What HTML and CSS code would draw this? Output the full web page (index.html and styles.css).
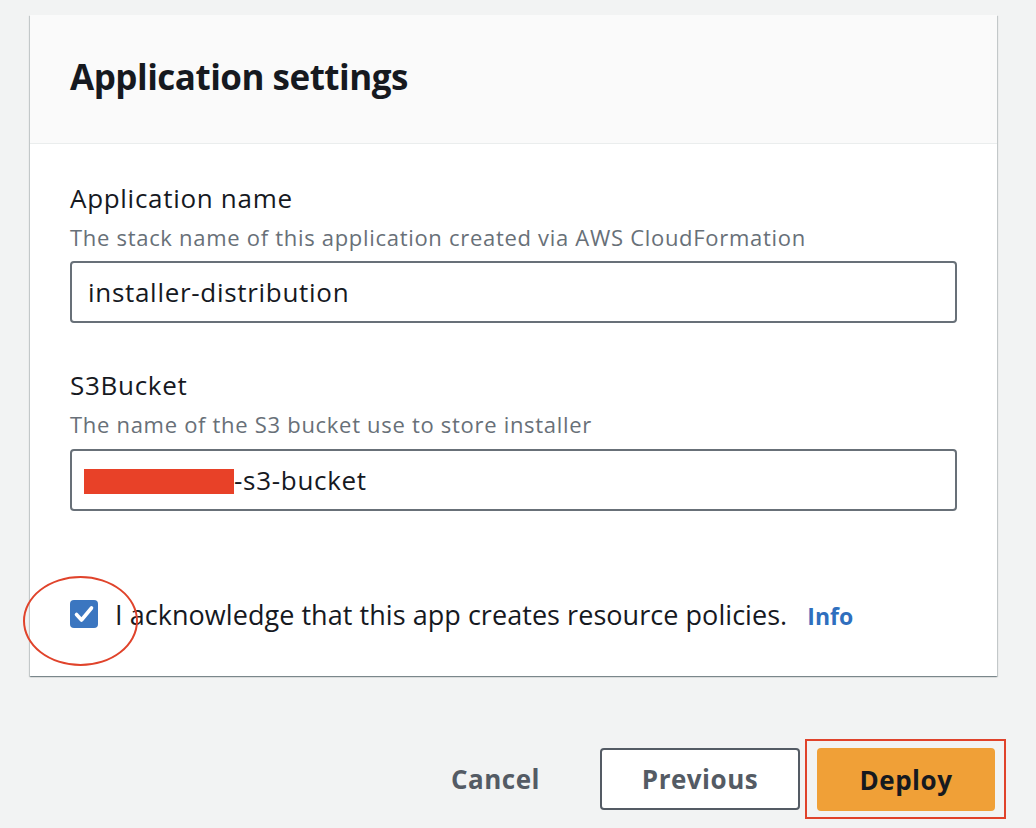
FILE: index.html
```html
<!DOCTYPE html>
<html>
<head>
<meta charset="utf-8">
<link rel="stylesheet" href="styles.css">
</head>
<body>
<div class="page">
  <section class="card">
    <header class="card-header">
      <h2 class="title">Application settings</h2>
    </header>
    <div class="card-body">
      <div class="field">
        <div class="label">Application name</div>
        <div class="desc">The stack name of this application created via AWS CloudFormation</div>
        <div class="input">installer-distribution</div>
      </div>
      <div class="field field-second">
        <div class="label">S3Bucket</div>
        <div class="desc">The name of the S3 bucket use to store installer</div>
        <div class="input input-second"><span class="redact"></span>-s3-bucket</div>
      </div>
      <div class="ack">
        <span class="checkbox">
          <svg width="28" height="28" viewBox="0 0 28 28"><rect x="0" y="0" width="28" height="28" rx="4" fill="#3b76c0"/><path d="M6.5 14.5 L11.5 20 L21.5 8" fill="none" stroke="#fff" stroke-width="3.6" stroke-linecap="round" stroke-linejoin="round"/></svg>
        </span>
        <span class="ack-text">I acknowledge that this app creates resource policies.</span>
        <a class="info">Info</a>
        <span class="ring"></span>
      </div>
    </div>
  </section>
  <div class="actions">
    <button class="btn btn-link">Cancel</button>
    <button class="btn btn-normal">Previous</button>
    <span class="highlight"><button class="btn btn-primary">Deploy</button></span>
  </div>
</div>
</body>
</html>
```
FILE: styles.css
```css
html, body {
  margin: 0;
  padding: 0;
  background: #f2f3f3;
  font-family: "Open Sans", "Noto Sans", sans-serif;
  color: #16191f;
}
.page {
  padding: 15px 39px 0 30px;
}
.card {
  background: #fff;
  box-shadow: 0 1px 1px 0 rgba(0,28,36,0.3), 1px 1px 1px 0 rgba(0,28,36,0.15), -1px 1px 1px 0 rgba(0,28,36,0.15);
}
.card-header {
  background: #fafafa;
  height: 123px;
  border-bottom: 1px solid #eaeded;
  display: flex;
  align-items: center;
  padding: 0 40px 5px 40px;
}
.title {
  margin: 0;
  font-size: 35px;
  font-weight: 700;
  letter-spacing: -0.5px;
  line-height: 40px;
}
.card-body {
  padding: 37px 40px 0 40px;
  height: 532px;
  box-sizing: border-box;
  position: relative;
}
.field { display: flex; flex-direction: column; }
.field-second { margin-top: 45px; }
.label {
  font-size: 26px;
  line-height: 34px;
  letter-spacing: 0.7px;
}
.desc {
  font-size: 22px;
  line-height: 30px;
  color: #687078;
  letter-spacing: 0.7px;
  margin-top: 7px;
}
.input {
  margin-top: 9px;
  height: 62px;
  box-sizing: border-box;
  border: 2px solid #687078;
  border-radius: 4px;
  display: flex;
  align-items: center;
  padding: 0 16px;
  font-size: 26px;
  letter-spacing: 0.7px;
}
.input-second { margin-top: 10px; }
.redact {
  display: inline-block;
  width: 150px;
  height: 25px;
  background: #e84128;
  margin-left: -4px;
  margin-top: 2px;
}
.ack {
  margin-top: 83px;
  display: flex;
  align-items: center;
  position: relative;
  height: 40px;
}
.checkbox { display: flex; width: 28px; height: 28px; }
.ack-text {
  margin-left: 17px;
  font-size: 27px;
  letter-spacing: 0.05px;
}
.info {
  margin-left: 20px;
  margin-top: 3px;
  font-size: 23px;
  font-weight: 700;
  color: #2f6fbe;
}
.ring {
  position: absolute;
  left: -47px;
  top: -18px;
  width: 111px;
  height: 86px;
  border: 2px solid #e0432b;
  border-radius: 50%;
}
.actions {
  display: flex;
  justify-content: flex-end;
  align-items: center;
  margin-top: 63px;
  margin-right: -9px;
}
.btn {
  font-family: "Open Sans", "Noto Sans", sans-serif;
  font-weight: 700;
  font-size: 26px;
  letter-spacing: 0.5px;
  height: 63px;
  border-radius: 4px;
  cursor: pointer;
}
.btn-link {
  background: none;
  border: none;
  color: #545b64;
  padding: 0;
  margin-right: 60px;
}
.btn-normal {
  background: #fff;
  border: 2px solid #545b64;
  color: #545b64;
  width: 200px;
  height: 62px;
}
.highlight {
  margin-left: 5px;
  border: 2px solid #e0432b;
  padding: 7px 9px 6px 10px;
  display: flex;
}
.btn-primary {
  background: #f0a037;
  border: none;
  color: #16191f;
  width: 178px;
}
```
